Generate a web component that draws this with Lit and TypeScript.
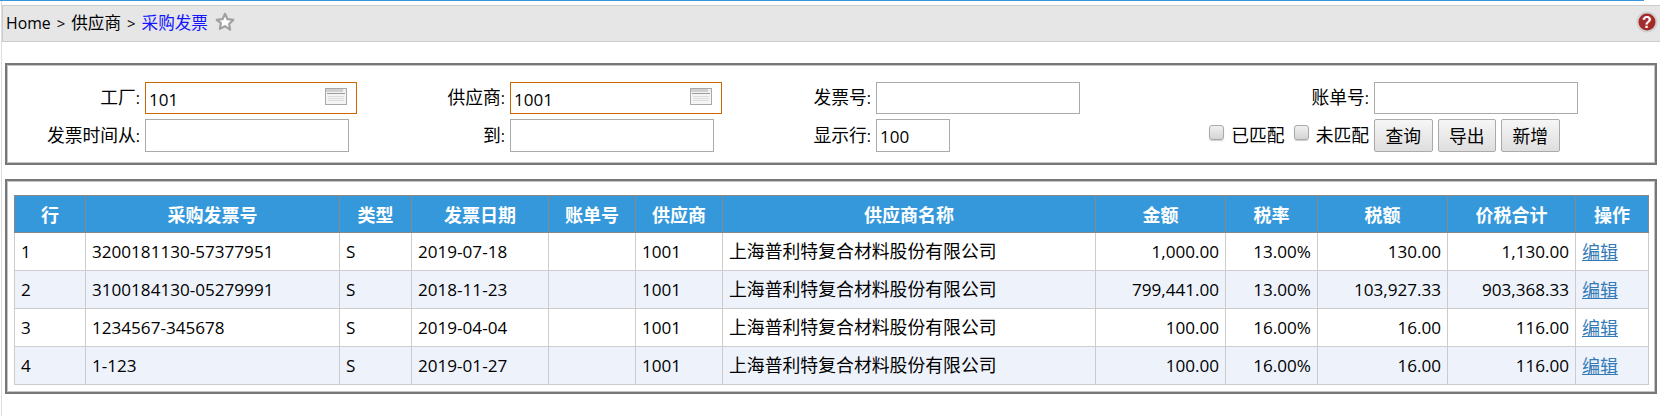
import { LitElement, html, css, svg } from "lit";
import { customElement } from "lit/decorators.js";

const COLS = [71, 254, 72, 137, 87, 87, 373, 130, 92, 130, 128, 73];
const HEAD = ["行", "采购发票号", "类型", "发票日期", "账单号", "供应商", "供应商名称", "金额", "税率", "税额", "价税合计", "操作"];
const ROWS = [
  ["1", "3200181130-57377951", "S", "2019-07-18", "1001", "1,000.00", "13.00%", "130.00", "1,130.00"],
  ["2", "3100184130-05279991", "S", "2018-11-23", "1001", "799,441.00", "13.00%", "103,927.33", "903,368.33"],
  ["3", "1234567-345678", "S", "2019-04-04", "1001", "100.00", "16.00%", "16.00", "116.00"],
  ["4", "1-123", "S", "2019-01-27", "1001", "100.00", "16.00%", "16.00", "116.00"],
];

const pickerIcon = svg`<svg class="picker" width="22" height="17" viewBox="0 0 22 17">
  <rect x="0.5" y="0.5" width="21" height="16" fill="#f4f4f4" stroke="#a8a8a8"/>
  <rect x="1" y="1" width="20" height="3" fill="#cfcfcf"/>
  <rect x="18" y="1" width="3" height="3" fill="#eee"/>
  <rect x="2" y="5" width="18" height="1" fill="#9a9a9a"/>
  <rect x="3" y="8" width="16" height="1" fill="#dcdcdc"/>
  <rect x="3" y="10" width="16" height="1" fill="#dcdcdc"/>
  <rect x="3" y="12" width="16" height="1" fill="#dcdcdc"/>
</svg>`;

@customElement("app-root")
export class AppRoot extends LitElement {
  static styles = css`
    :host {
      display: block;
      font-family: "Open Sans", "Noto Sans CJK SC", sans-serif;
      color: #000;
      font-size: 17.8px;
    }
    * { box-sizing: border-box; }
    .page {
      margin-left: 1px;
      border-left: 1px solid #ddd;
      min-height: 416px;
      padding-top: 5px;
      position: relative;
    }
    .topline {
      position: absolute;
      left: -2px;
      top: 0;
      width: 1644px;
      height: 1px;
      background: #3498db;
    }
    .crumb {
      height: 37px;
      background: #e6e6e6;
      border: 1px solid #ccc;
      border-right: none;
      display: flex;
      align-items: center;
      padding: 0 2px 0 3px;
      font-size: 16.6px;
      line-height: 1;
      white-space: nowrap;
    }
    .crumb .home { font-size: 15.8px; }
    .crumb .sep { font-size: 15px; margin: 0 6px; }
    .crumb a { color: #1414ff; text-decoration: none; }
    .crumb .star { margin-left: 7px; margin-top: -4px; }
    .crumb .help { margin-left: auto; margin-top: -4px; }
    .box {
      margin: 0 3px;
      border: 2px solid #777;
      box-shadow: inset 0 0 0 1px #c4c4c4;
    }
    .form {
      margin-top: 21px;
      height: 102px;
      padding: 17px 0 0 0;
      display: grid;
      grid-template-columns: 138px 215px 150px 216px 150px 248px 250px 1fr;
      grid-template-rows: 32px 33px;
      row-gap: 5px;
      align-items: center;
    }
    .label {
      text-align: right;
      padding-right: 5px;
      white-space: nowrap;
      line-height: 1;
    }
    .colon { font-size: 16px; }
    input[type="text"] {
      display: block;
      height: 100%;
      width: 204px;
      border: 1px solid #aaa;
      padding: 2px 3px 0;
      font: 17px "Open Sans", sans-serif;
      color: #000;
      background: #fff;
      outline: none;
      border-radius: 0;
    }
    .field { position: relative; height: 100%; }
    .field input.req { width: 212px; border-color: #cc6600; }
    .field input.short { width: 74px; }
    .picker { position: absolute; left: 180px; top: 6px; }
    .checks {
      display: flex;
      justify-content: flex-end;
      align-items: center;
      padding-right: 5px;
      white-space: nowrap;
      line-height: 1;
    }
    .checks label { display: flex; align-items: center; }
    .checks label + label { margin-left: 9px; }
    input[type="checkbox"] {
      appearance: none;
      width: 15px;
      height: 15px;
      margin: -5px 7px 0 0;
      border: 1px solid #aaa;
      border-radius: 3px;
      background: linear-gradient(#f0f0f0, #d4d4d4);
      box-shadow: 0 1px 1px #ccc;
    }
    .btns { display: flex; gap: 5px; height: 100%; }
    button {
      width: 58.5px;
      height: 100%;
      padding: 0;
      border: 1px solid #aaa;
      border-radius: 2px;
      background: linear-gradient(#f6f6f6, #dedede);
      font: 17.8px "Noto Sans CJK SC", sans-serif;
      color: #000;
      line-height: 1;
    }
    .list {
      margin-top: 14px;
      height: 215px;
      padding: 14px 7px;
    }
    table {
      table-layout: fixed;
      border-collapse: collapse;
      width: 1634px;
    }
    th {
      height: 37px;
      background: #3498db;
      color: #fff;
      font-weight: 700;
      font-size: 18px;
      font-family: "Noto Sans CJK SC", sans-serif;
      border: 1px solid #888;
      padding: 0;
      line-height: 1;
    }
    td {
      height: 38px;
      border: 1px solid #ccc;
      padding: 1px 6px 0;
      font-size: 17.1px;
      line-height: 1;
      white-space: nowrap;
      overflow: hidden;
    }
    tr:nth-child(even) td { background: #eef3fb; }
    td.r { text-align: right; }
    td.cjk { font-family: "Noto Sans CJK SC", sans-serif; font-size: 17.85px; padding: 0 6px 2px; }
    td a { color: #337ab7; text-decoration: underline; font-family: "Noto Sans CJK SC", sans-serif; font-size: 18px; }
  `;

  render() {
    return html`
      <div class="page">
        <div class="topline"></div>
        <div class="crumb">
          <span class="home">Home</span><span class="sep">&gt;</span><span>供应商</span><span class="sep">&gt;</span><a>采购发票</a>
          <svg class="star" width="20" height="20" viewBox="0 0 24 24">
            <path d="M12 2.200l3 6.400 7 .9-5.100 4.800 1.300 6.900L12 17l-6.200 3.200 1.300-6.900L2 9.500l7-.9z" fill="#fff" stroke="#a0a0a0" stroke-width="2.600" stroke-linejoin="round"/>
          </svg>
          <svg class="help" width="22" height="22" viewBox="0 0 22 22">
            <circle cx="11" cy="11" r="10.500" fill="#d0d0d0"/>
            <circle cx="11" cy="11" r="8.500" fill="#a52a2a"/>
            <text x="11" y="16.500" text-anchor="middle" font-family="Liberation Sans, sans-serif" font-weight="700" font-size="16" fill="#fff">?</text>
          </svg>
        </div>

        <div class="box form">
          <div class="label">工厂<span class="colon">:</span></div>
          <div class="field"><input class="req" type="text" .value=${"101"} />${pickerIcon}</div>
          <div class="label">供应商<span class="colon">:</span></div>
          <div class="field"><input class="req" type="text" .value=${"1001"} />${pickerIcon}</div>
          <div class="label">发票号<span class="colon">:</span></div>
          <div class="field"><input type="text" /></div>
          <div class="label">账单号<span class="colon">:</span></div>
          <div class="field"><input type="text" /></div>

          <div class="label">发票时间从<span class="colon">:</span></div>
          <div class="field"><input type="text" /></div>
          <div class="label">到<span class="colon">:</span></div>
          <div class="field"><input type="text" /></div>
          <div class="label">显示行<span class="colon">:</span></div>
          <div class="field"><input class="short" type="text" .value=${"100"} /></div>
          <div class="checks">
            <label><input type="checkbox" />已匹配</label>
            <label><input type="checkbox" />未匹配</label>
          </div>
          <div class="btns">
            <button>查询</button><button>导出</button><button>新增</button>
          </div>
        </div>

        <div class="box list">
          <table>
            <colgroup>${COLS.map((w) => html`<col style="width:${w}px" />`)}</colgroup>
            <thead><tr>${HEAD.map((h) => html`<th>${h}</th>`)}</tr></thead>
            <tbody>
              ${ROWS.map(
                (r) => html`<tr>
                  <td>${r[0]}</td>
                  <td>${r[1]}</td>
                  <td>${r[2]}</td>
                  <td>${r[3]}</td>
                  <td></td>
                  <td>${r[4]}</td>
                  <td class="cjk">上海普利特复合材料股份有限公司</td>
                  <td class="r">${r[5]}</td>
                  <td class="r">${r[6]}</td>
                  <td class="r">${r[7]}</td>
                  <td class="r">${r[8]}</td>
                  <td><a>编辑</a></td>
                </tr>`
              )}
            </tbody>
          </table>
        </div>
      </div>
    `;
  }
}
